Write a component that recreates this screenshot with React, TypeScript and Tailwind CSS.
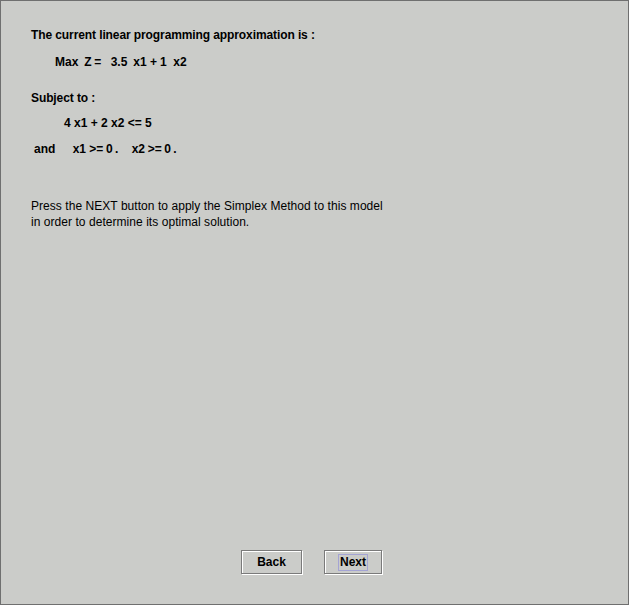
const FONT = { fontFamily: '"Liberation Sans", Arial, sans-serif' };

// [text, x] pairs: x is the left edge of each token in page pixels
type Token = [string, number];

function Tokens({ items, className }: { items: Token[]; className?: string }) {
  const start = items[0][1];
  return (
    <div className={`h-[16px] leading-[16px] whitespace-pre flex ${className ?? ""}`}>
      <div className="shrink-0" style={{ width: start - 31 }} />
      {items.map(([text, x], i) => {
        const next = items[i + 1];
        return (
          <span
            key={i}
            className="shrink-0"
            style={next ? { width: next[1] - x } : undefined}
          >
            {text}
          </span>
        );
      })}
    </div>
  );
}

function Button({ label, focused, width }: { label: string; focused?: boolean; width: string }) {
  return (
    <button
      className={`${width} h-[24px] flex items-center justify-center border border-[#7a7a7a] bg-[#cbccc9] shadow-[inset_1px_1px_0_#ffffff,1px_1px_0_#ffffff] text-[12px] font-bold text-black`}
    >
      <span
        className={
          focused
            ? "px-[1px] leading-[15px] border border-[#a4a4d4]"
            : "leading-[15px] border border-transparent"
        }
      >
        {label}
      </span>
    </button>
  );
}

export default function App() {
  return (
    <div
      className="w-[629px] h-[605px] bg-[#cbccc9] border border-[#6f6f6f] flex flex-col text-black"
      style={FONT}
    >
      <div className="flex-1 pl-[30px] pt-[26px] font-bold text-[12px]">
        <div className="h-[16px] leading-[16px] tracking-[-0.1px]">
          The current linear programming approximation is :
        </div>
        <Tokens
          className="mt-[11px]"
          items={[
            ["Max", 55],
            ["Z", 84.3],
            ["=", 94.3],
            ["3.5", 110.7],
            ["x1", 133.3],
            ["+", 150],
            ["1", 160],
            ["x2", 173.3],
          ]}
        />
        <div className="mt-[20px] h-[16px] leading-[16px] tracking-[-0.1px]">Subject to :</div>
        <div className="mt-[9px] pl-[33px] h-[16px] leading-[16px] whitespace-pre">
          4 x1 + 2 x2 {"<="} 5
        </div>
        <Tokens
          className="mt-[10px]"
          items={[
            ["and", 34],
            ["x1", 72.7],
            [">=", 89.3],
            ["0", 106],
            [".", 115],
            ["x2", 131.7],
            [">=", 147.7],
            ["0", 164.3],
            [".", 173.3],
          ]}
        />
        <div className="mt-[41px] font-normal leading-[16px] tracking-[0.05px]">
          <div>Press the NEXT button to apply the Simplex Method to this model</div>
          <div>in order to determine its optimal solution.</div>
        </div>
      </div>
      <div className="flex justify-center gap-[22px] pb-[30px] pr-[6px]">
        <Button label="Back" width="w-[61px]" />
        <Button label="Next" width="w-[58px]" focused />
      </div>
    </div>
  );
}
